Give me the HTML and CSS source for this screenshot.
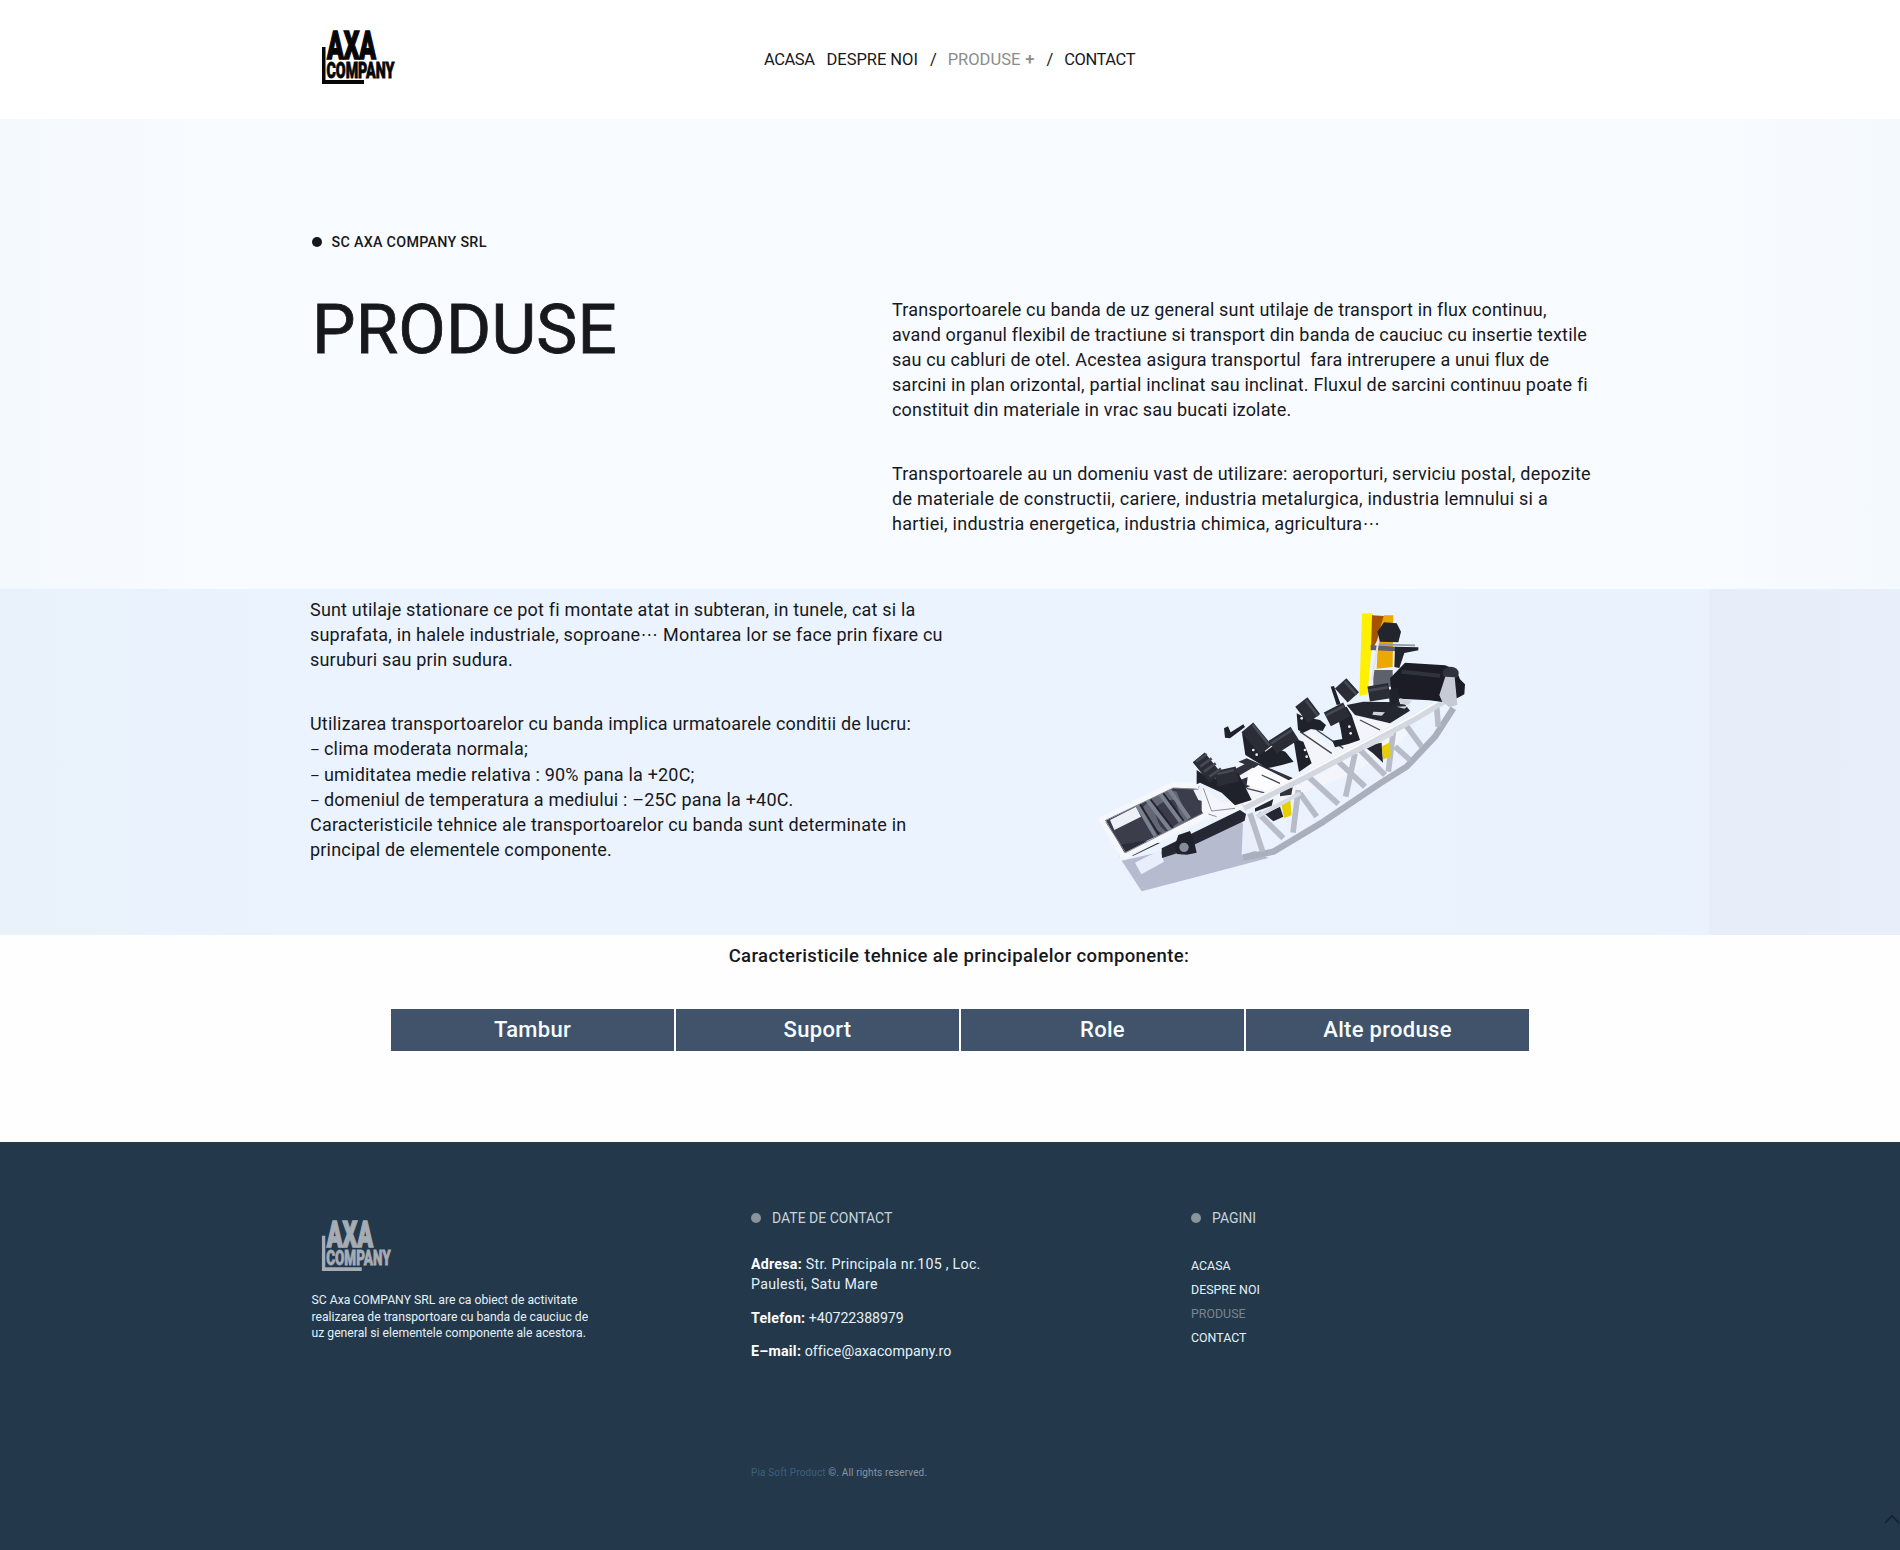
FILE: index.html
```
<!DOCTYPE html>
<html lang="ro">
<head>
<meta charset="utf-8">
<title>Produse - AXA Company</title>
<link rel="stylesheet" href="styles.css">
</head>
<body>
<header class="site-header">
  <div class="container header-inner">
    <svg class="logo" width="76" height="60" viewBox="0 0 76 60" role="img" aria-label="AXA Company">
      <text class="logo-axa" x="6" y="34.5" textLength="49" lengthAdjust="spacingAndGlyphs">AXA</text>
      <text class="logo-company" x="5.5" y="53.5" textLength="68" lengthAdjust="spacingAndGlyphs">COMPANY</text>
      <path class="logo-corner" d="M1 23h3.5v33H43v4H1z"/>
    </svg>
    <nav class="main-nav">
      <a class="nav-home">ACASA</a><a class="nav-about">DESPRE NOI</a><span class="slash">/</span><a class="nav-products">PRODUSE</a><span class="plus">+</span><span class="slash">/</span><a class="nav-contact">CONTACT</a>
    </nav>
  </div>
</header>

<section class="intro">
  <div class="container">
    <div class="eyebrow"><i class="dot"></i><span>SC AXA COMPANY SRL</span></div>
    <div class="intro-grid">
      <h1>PRODUSE</h1>
      <div class="copy intro-copy">
        <p><span class="line">Transportoarele cu banda de uz general sunt utilaje de transport in flux continuu,</span>
        <span class="line">avand organul flexibil de tractiune si transport din banda de cauciuc cu insertie textile</span>
        <span class="line">sau cu cabluri de otel. Acestea asigura transportul&nbsp; fara intrerupere a unui flux de</span>
        <span class="line">sarcini in plan orizontal, partial inclinat sau inclinat. Fluxul de sarcini continuu poate fi</span>
        <span class="line">constituit din materiale in vrac sau bucati izolate.</span></p>
        <p class="uses"><span class="line">Transportoarele au un domeniu vast de utilizare: aeroporturi, serviciu postal, depozite</span>
        <span class="line">de materiale de constructii, cariere, industria metalurgica, industria lemnului si a</span>
        <span class="line">hartiei, industria energetica, industria chimica, agricultura<span class="dots">…</span></span></p>
      </div>
    </div>
  </div>
</section>

<section class="details">
  <div class="container details-grid">
    <div class="copy details-copy">
      <p><span class="line">Sunt utilaje stationare ce pot fi montate atat in subteran, in tunele, cat si la</span>
      <span class="line">suprafata, in halele industriale, soproane<span class="dots">…</span> Montarea lor se face prin fixare cu</span>
      <span class="line">suruburi sau prin sudura.</span></p>
      <p><span class="line">Utilizarea transportoarelor cu banda implica urmatoarele conditii de lucru:</span>
      <span class="line"><span class="dash">–</span> clima moderata normala;</span>
      <span class="line"><span class="dash">–</span> umiditatea medie relativa : 90% pana la +20C;</span>
      <span class="line"><span class="dash">–</span> domeniul de temperatura a mediului : –25C pana la +40C.</span>
      <span class="line">Caracteristicile tehnice ale transportoarelor cu banda sunt determinate in</span>
      <span class="line">principal de elementele componente.</span></p>
    </div>
    <svg class="machine" width="400" height="310" viewBox="0 0 1200 930" role="img" aria-label="Transportor cu banda">
      <!-- shadow on the ground -->
      <path fill="#b6bbcf" d="M125 812l60 92 190-50 190-50-55-30-30-100-120 50-110 60z"/>
      <path fill="#e9effa" d="M165 818l75-38 12 35-68 38zM490 675l30-10 30 110-65 20z"/>
      <!-- tail frame -->
      <path fill="#3b3d4b" d="M75 690l205-100 80 0 30 75-250 115-20 20z"/>
      <path fill="#eef0f8" d="M90 690l78-40 15 30-80 40zM340 600l30-15 5 50-20-5z"/>
      <path fill="#2b2d39" d="M115 765l75-12 50 6-80 38-35-8z"/>
      <path fill="#626675" d="M190 650q55-60 100-45l35 85-65 45q-45-10-70-85z"/>
      <path fill="#3a3c4a" d="M225 655q30-30 60-25l20 60-45 35q-30-15-35-70z"/>
      <path fill="none" stroke="#7b818f" stroke-width="12" d="M168 640l58 98M198 625l72 95M233 602l68 92M268 600l60 85"/>
      <path fill="none" stroke="#20222c" stroke-width="5" d="M177 638l60 95M208 623l72 93M243 600l68 92"/>
      <path fill="none" stroke="#f5f7fb" stroke-width="18" stroke-linejoin="round" d="M130 800L65 688l215-104 75 4M130 800l250-125"/>
      <path fill="none" stroke="#7e8494" stroke-width="3" d="M77 695l60 93 240-123M75 692l205-98 75 4"/>
      <path fill="#f4f6fb" d="M365 590l65 50 55-10 10 22-75 35-45-5-10-20z"/>
      <path fill="none" stroke="#8a90a0" stroke-width="3" d="M370 595l25 68 70-8M385 672l25 8"/>
      <path fill="#252733" d="M245 775l235-115 18 12-4 20-210 100-38 12z"/>
      <path fill="#20222b" d="M285 765l10-30 35-12 12 30 8 35-30 6-30-2z"/>
      <circle cx="312" cy="772" r="14" fill="#858c9c"/>
      <!-- deck between the two side trusses -->
      <path fill="#f4f5fa" d="M430 545l70-40 150 65 40-30-30-80 35-40 75 65 60-50-15-50 60-10 110 50-60 70-170 80-220 85-95-30z"/>
      <path fill="#30323d" d="M440 550l55-28 25 10-50 30zM465 575l70-25 15 20-60 28zM500 505l145 62-20 10-150-62zM600 604l38-12-4 22-34 5z"/>
      <path fill="#fdfdff" d="M505 545l30-20 100 50-50 35-85-25z"/>
      <path fill="none" stroke="#444753" stroke-width="4" d="M500 595l60 15M545 555l55 25M660 425l95 65M710 420l80 55M840 390l60 30"/>
      <!-- lower side truss -->
      <path fill="none" stroke="#a9afbd" stroke-width="19" stroke-linejoin="round" d="M490 803l90-18 150-90 170-115 80-50 85-90 55-85"/>
      <path fill="none" stroke="#b7bcc8" stroke-width="17" d="M510 670l38 115M535 670l75 75M655 600l-16 128M660 610l50 70M685 560l90 82M825 490l-28 130M770 510l85 80M835 475l80 80M940 425l-15 120M945 470l45 40M970 395l55 75M1070 350l5 60"/>
      <path fill="#252733" d="M525 655l55-28-5 20-50 18zM555 672l45-22 10 30-30 14zM850 468l55-10 4 60-30-28z"/>
      <path fill="#e7cf00" d="M603 640l28-10 4 46-22 8zM905 470l25-14 2 44-22 8z"/>
      <path fill="none" stroke="#d3d7df" stroke-width="23" d="M490 652l180-90 160-85 170-90 115-70"/>
      <path fill="none" stroke="#f8f9fc" stroke-width="7" d="M490 643l180-90 160-85 170-90 115-70"/>
      <path fill="none" stroke="#d9dce4" stroke-width="12" d="M530 680l130-70M850 475l90-45"/>
      <!-- drive column -->
      <path fill="#fff000" d="M846 70h32l-3 98-12 145-25 5z"/>
      <path fill="#a65300" d="M876 76l36 2-4 40-20 40-15 25z"/>
      <path fill="#eaa900" d="M912 76h28l-2 155-48 5 5-105z"/>
      <path fill="#5d616c" d="M872 165l75 5v14l-75-4zM880 240h58v50h-58z"/>
      <path fill="none" stroke="#e9e6df" stroke-width="6" d="M935 102q-30 5-38 38l-8 50-14 82"/>
      <path fill="#22242e" d="M892 125l20-28 38 3 13 25-8 32-55-2zM945 170l70 2v9l-42 8-15 45-15-3z"/>
      <path stroke="#9298a5" stroke-width="5" d="M900 163l105 3"/>
      <!-- drive drum -->
      <path fill="#1b1c25" d="M930 265l45-47 120 8q38 10 45 42l15 15-2 30-15 8-20 10-30 5-40-5-90-5-25-30z"/>
      <path fill="none" stroke="#30323d" stroke-width="12" d="M965 245l115 12"/>
      <ellipse cx="1112" cy="250" rx="24" ry="20" fill="#30323d"/>
      <path fill="#c5cad5" d="M1078 315l18-55 28 2 8 82-24 8-22-18z"/>
      <path fill="#242630" d="M800 345l50-10 120 2 20 25-60 38-105-25z"/>
      <path fill="#cfd3dc" d="M880 365l35 2-10 10-28-3zM950 350l35-2-12 8zM960 325l35 8-10 12-25-3z"/>
      <!-- roller frames -->
      <g fill="#20222b">
        <path d="M752 290l10-2 20 55-12 2zM925 300l28-8 5 45-28 10z"/>
        <path d="M650 370l20 10 50 10 18 15-10 18-35-6-25 12-14-10zM770 365l30-15 15 25 25 75-35 12-40 10-8-20 30-5-5-30z"/>
        <path d="M486 430l20 5 50 50 20-15 40 15 25 30-35 10-45 10-65-40zM640 445l30 10 25 65-38 26-8-45zM432 415l12-6 8 18 38-24 5 8-45 34-15-2z"/>
        <path d="M350 540l30 20 55 10 20-25 20 5 30 60 10 20-50 16-40-38-65-30-10 5z"/>
      </g>
      <!-- rollers -->
      <g fill="none" stroke="#2a2c36" stroke-width="46">
        <path d="M782 280l38 42M866 312l62-10M664 336l38 50M742 388l58-30M502 412l56 68M578 472l66-42M356 502l50 62M408 566l64-14"/>
      </g>
      <g fill="none" stroke="#454954" stroke-width="8">
        <path d="M794 274l36 40M864 302l58-10M678 332l36 46M738 376l54-28M518 404l50 62M574 460l62-40M412 552l50-12"/>
        <path d="M348 515l32-23M360 530l35-25M372 545l35-25M388 560l35-24"/>
      </g>
      <g fill="#eceef3"><circle cx="520" cy="480" r="4"/><circle cx="530" cy="494" r="4"/><circle cx="808" cy="410" r="4"/><circle cx="812" cy="430" r="4"/><circle cx="675" cy="480" r="4"/><circle cx="680" cy="500" r="4"/><circle cx="665" cy="385" r="4"/></g>
    </svg>
  </div>
</section>

<section class="components">
  <div class="container">
    <h2>Caracteristicile tehnice ale principalelor componente:</h2>
    <div class="tabs"><a>Tambur</a><a>Suport</a><a>Role</a><a>Alte produse</a></div>
  </div>
</section>

<footer class="site-footer">
  <div class="container footer-grid">
    <div class="about">
      <svg class="logo logo-light" width="72" height="57" viewBox="0 0 76 60" role="img" aria-label="AXA Company">
        <text class="logo-axa" x="6" y="34.5" textLength="49" lengthAdjust="spacingAndGlyphs">AXA</text>
        <text class="logo-company" x="5.5" y="53.5" textLength="68" lengthAdjust="spacingAndGlyphs">COMPANY</text>
        <path class="logo-corner" d="M1 23h3.5v33H43v4H1z"/>
      </svg>
      <p><span class="line">SC Axa COMPANY SRL are ca obiect de activitate</span>
      <span class="line">realizarea de transportoare cu banda de cauciuc de</span>
      <span class="line">uz general si elementele componente ale acestora.</span></p>
    </div>
    <div class="contact">
      <div class="footer-title"><i class="dot"></i><span>DATE DE CONTACT</span></div>
      <p class="address"><span class="line"><b>Adresa:</b> Str. Principala nr.105 , Loc.</span><span class="line">Paulesti, Satu Mare</span></p>
      <p class="phone"><b>Telefon:</b> +40722388979</p>
      <p><b>E–mail:</b> office@axacompany.ro</p>
    </div>
    <div class="pages">
      <div class="footer-title"><i class="dot"></i><span>PAGINI</span></div>
      <ul><li><a>ACASA</a></li><li><a>DESPRE NOI</a></li><li class="current"><a>PRODUSE</a></li><li><a>CONTACT</a></li></ul>
    </div>
    <p class="copyright"><span class="credit">Pia Soft Product</span> ©. All rights reserved.</p>
  </div>
  <svg class="to-top" width="16" height="10" viewBox="0 0 16 10"><path d="M1 9l7-7 7 7" fill="none" stroke="#14222d" stroke-width="1.6"/></svg>
</footer>
</body>
</html>
```
FILE: styles.css
```
* { box-sizing: border-box; }
body { margin: 0; font-family: Roboto, "Liberation Sans", sans-serif; color: #17181c; background: #fff; overflow-x: hidden; }
h1, h2, p, ul { margin: 0; padding: 0; }
.container { width: 1280px; margin: 0 auto; }
.line { display: block; white-space: nowrap; }
.dot { display: block; flex: none; width: 10px; height: 10px; border-radius: 50%; background: currentColor; }
.dots { font-family: "Liberation Sans", sans-serif; line-height: 0; vertical-align: 5px; }
.dash { font-size: 15px; line-height: 0; letter-spacing: -.5px; }

.site-header { height: 119px; background: #fff; }
.header-inner { display: flex; align-items: flex-start; }
.logo { display: block; overflow: visible; fill: #060606; color: #060606; font-family: Roboto, sans-serif; font-weight: 900; }
.header-inner .logo { margin: 24px 0 0 11px; }
.logo-axa { font-size: 39.5px; stroke: currentColor; stroke-width: 1.6px; }
.logo-company { font-size: 21.5px; stroke: currentColor; stroke-width: .8px; }
.main-nav { display: flex; align-items: baseline; margin: 50px 0 0 367px; font-size: 16.5px; line-height: 20px; white-space: nowrap; }
.nav-home, .nav-contact { letter-spacing: -.45px; }
.nav-about { margin-left: 12px; letter-spacing: -.03px; }
.slash { margin: 0 11px 0 12px; }
.nav-products, .plus { color: #8c8c8c; }
.plus { margin-left: 5px; font-weight: 500; }

.intro { height: 470px; padding-top: 115px; background: linear-gradient(90deg, #f4f9fe, #f8fbff 12%, #f8fbff 90%, #f4f9fe); }
.eyebrow { display: flex; align-items: center; gap: 9.5px; padding-left: 2px; font-size: 14.3px; line-height: 16px; font-weight: 500; letter-spacing: .29px; white-space: nowrap; }
.intro-grid { display: grid; grid-template-columns: 582px 1fr; margin-top: 47px; }
h1 { font-size: 69px; line-height: 70px; font-weight: 400; padding-left: 2px; margin-top: -2px; letter-spacing: .15px; -webkit-text-stroke: .8px #17181c; }
.copy { font-size: 18px; line-height: 25.1px; letter-spacing: .19px; }
.intro-copy { letter-spacing: .17px; }
.uses { letter-spacing: .24px; }
.copy p + p { margin-top: 38.5px; }

.details { height: 346px; background: linear-gradient(90deg, #e9f1fa, #eaf3fe 15%, #ebf3fe 60%, #eaf2fe 89.9%, #e7eefa 90%, #e8effb); }
.details-grid { display: grid; grid-template-columns: 770px 1fr; }
.details-copy { padding-top: 8px; line-height: 25.2px; }
.machine { display: block; margin-top: 1px; }

.components { height: 207px; background: #fefefe; }
h2 { padding-top: 9px; padding-left: 18px; text-align: center; font-size: 18.5px; line-height: 24px; font-weight: 500; letter-spacing: .38px; }
.tabs { display: grid; grid-template-columns: repeat(4, 1fr); gap: 2px; width: 1138px; margin: 41px 0 0 81px; }
.tabs a { height: 42px; background: #40536a; color: #f5fbff; font-size: 22px; font-weight: 500; line-height: 42px; letter-spacing: .3px; text-align: center; }

.site-footer { position: relative; height: 408px; background: #23384b; color: #e5f1f8; }
.footer-grid { display: grid; grid-template-columns: 441px 440px 1fr; }
.about { padding: 72px 0 0 1.5px; }
.logo-light { fill: #a6acb4; color: #a6acb4; margin-left: 9px; }
.about p { margin-top: 21px; font-size: 12.2px; line-height: 16.5px; }
.contact, .pages { padding-top: 68px; }
.footer-title { display: flex; align-items: center; gap: 11px; font-size: 14px; line-height: 16px; color: #c9d3db; }
.footer-title .dot { background: #8b939b; }
.contact p { font-size: 14.2px; line-height: 20px; margin-top: 13.5px; white-space: nowrap; letter-spacing: .06px; }
.contact .address { margin-top: 28px; letter-spacing: .28px; }
.contact .phone { letter-spacing: -.08px; }
.contact b { font-weight: 700; color: #fff; letter-spacing: .26px; }
.pages ul { margin-top: 28px; list-style: none; font-size: 12.4px; line-height: 24px; letter-spacing: 0; }
.copyright { grid-column: 2; margin-top: 105px; font-size: 10px; line-height: 14px; letter-spacing: .14px; color: #8795a1; }
.current { color: #778591; }
.credit { color: #3d6079; }
.to-top { position: absolute; right: 0; bottom: 26px; }
```
